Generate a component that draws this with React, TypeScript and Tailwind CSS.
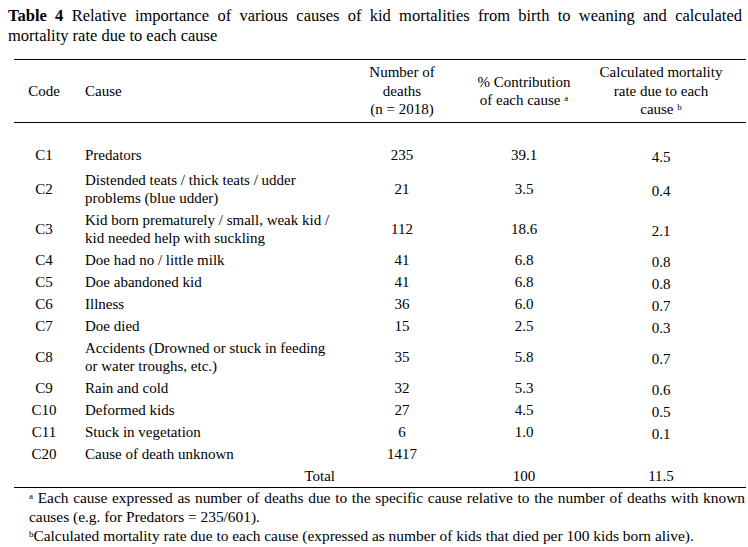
import React from "react";

type Row = {
  code: string;
  cause: string[];
  deaths: string;
  pct: string;
  rate: string;
};

const rows: Row[] = [
  { code: "C1", cause: ["Predators"], deaths: "235", pct: "39.1", rate: "4.5" },
  { code: "C2", cause: ["Distended teats / thick teats / udder", "problems (blue udder)"], deaths: "21", pct: "3.5", rate: "0.4" },
  { code: "C3", cause: ["Kid born prematurely / small, weak kid /", "kid needed help with suckling"], deaths: "112", pct: "18.6", rate: "2.1" },
  { code: "C4", cause: ["Doe had no / little milk"], deaths: "41", pct: "6.8", rate: "0.8" },
  { code: "C5", cause: ["Doe abandoned kid"], deaths: "41", pct: "6.8", rate: "0.8" },
  { code: "C6", cause: ["Illness"], deaths: "36", pct: "6.0", rate: "0.7" },
  { code: "C7", cause: ["Doe died"], deaths: "15", pct: "2.5", rate: "0.3" },
  { code: "C8", cause: ["Accidents (Drowned or stuck in feeding", "or water troughs, etc.)"], deaths: "35", pct: "5.8", rate: "0.7" },
  { code: "C9", cause: ["Rain and cold"], deaths: "32", pct: "5.3", rate: "0.6" },
  { code: "C10", cause: ["Deformed kids"], deaths: "27", pct: "4.5", rate: "0.5" },
  { code: "C11", cause: ["Stuck in vegetation"], deaths: "6", pct: "1.0", rate: "0.1" },
  { code: "C20", cause: ["Cause of death unknown"], deaths: "1417", pct: "", rate: "" },
];

const cols = "grid grid-cols-[60px_276px_104px_140px_134px] items-center";

function DataRow({ row, first }: { row: Row; first: boolean }) {
  return (
    <div className={`${cols} leading-[18px] pt-[2px] ${first ? "pb-[5px]" : "pb-[2px]"}`}>
      <div className="text-center">{row.code}</div>
      <div className="pl-[11px]">
        {row.cause.map((line) => (
          <div key={line}>{line}</div>
        ))}
      </div>
      <div className="text-center">{row.deaths}</div>
      <div className="text-center">{row.pct}</div>
      <div className="text-center translate-y-[2px]">{row.rate}</div>
    </div>
  );
}

export default function App() {
  return (
    <div className="w-[748px] h-[547px] bg-white text-black font-[Liberation_Serif] overflow-hidden">
      <div className="pl-[8px] pr-[6px] pt-[6px] text-[16.5px] leading-[20px]">
        <div className="text-justify [text-align-last:justify] whitespace-nowrap">
          <b>Table 4</b> Relative importance of various causes of kid mortalities from birth to weaning and calculated
        </div>
        <div>mortality rate due to each cause</div>
      </div>

      <div className="ml-[14px] w-[732px] mt-[13px] text-[15px]">
        <div className={`${cols} h-[64px] border-y-[1.5px] border-black leading-[18.5px]`}>
          <div className="text-center">Code</div>
          <div className="pl-[11px]">Cause</div>
          <div className="text-center">
            <div>Number of</div>
            <div>deaths</div>
            <div>(n = 2018)</div>
          </div>
          <div className="text-center">
            <div>% Contribution</div>
            <div>
              of each cause <sup className="text-[9px]">a</sup>
            </div>
          </div>
          <div className="text-center">
            <div>Calculated mortality</div>
            <div>rate due to each</div>
            <div>
              cause <sup className="text-[9px]">b</sup>
            </div>
          </div>
        </div>

        <div className="pt-[21px] border-b-[1.5px] border-black">
          {rows.map((r, i) => (
            <DataRow key={r.code} row={r} first={i === 0} />
          ))}
          <div className={`${cols} leading-[18px] py-[2px]`}>
            <div />
            <div className="text-right pr-[15px]">Total</div>
            <div />
            <div className="text-center">100</div>
            <div className="text-center">11.5</div>
          </div>
        </div>
      </div>

      <div className="ml-[29px] w-[716px] text-[15.4px] leading-[19px] whitespace-nowrap">
        <div className="text-justify [text-align-last:justify]">
          <sup className="text-[9px]">a</sup> Each cause expressed as number of deaths due to the specific cause relative to the number of deaths with known
        </div>
        <div>causes (e.g. for Predators = 235/601).</div>
        <div>
          <sup className="text-[9px]">b</sup>Calculated mortality rate due to each cause (expressed as number of kids that died per 100 kids born alive).
        </div>
      </div>
    </div>
  );
}
